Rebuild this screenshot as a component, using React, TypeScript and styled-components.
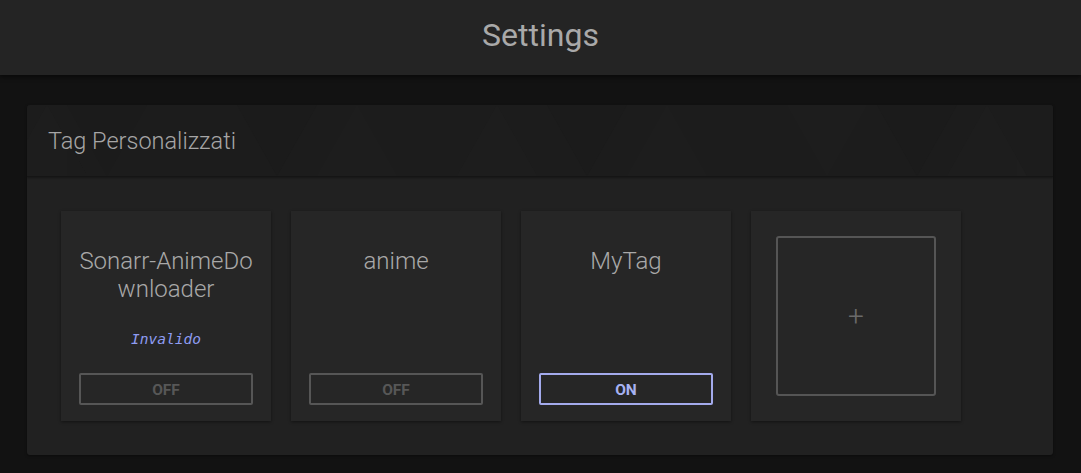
import React from "react";
import styled, { createGlobalStyle } from "styled-components";

const Global = createGlobalStyle`
  html, body { margin: 0; padding: 0; background: #121212; }
  body { font-family: Roboto, "Noto Sans", sans-serif; }
  * { box-sizing: border-box; }
`;

const Page = styled.div`
  width: 1081px;
  min-height: 473px;
  background: #121212;
`;

const TopBar = styled.header`
  height: 75px;
  background: #242424;
  display: flex;
  align-items: center;
  justify-content: center;
  padding-bottom: 5px;
  box-shadow: 0 2px 4px rgba(0, 0, 0, 0.5);
`;

const Title = styled.h1`
  margin: 0;
  font-family: Roboto, sans-serif;
  font-weight: 400;
  font-size: 32px;
  color: #a9a9a9;
`;

const Content = styled.main`
  padding: 30px 28px 18px 27px;
`;

const Panel = styled.section`
  background: #212121;
  border-radius: 3px;
  overflow: hidden;
  box-shadow: 0 1px 3px rgba(0, 0, 0, 0.4);
`;

const PanelHeader = styled.div`
  position: relative;
  height: 72px;
  background: #1c1c1c;
  display: flex;
  align-items: center;
  padding-left: 21px;
  border-bottom: 1px solid #151515;
  box-shadow: 0 1px 2px rgba(0, 0, 0, 0.35);
`;

const Pattern = styled.svg`
  position: absolute;
  inset: 0;
  width: 100%;
  height: 100%;
`;

const PanelTitle = styled.h2`
  position: relative;
  margin: 0;
  font-family: Roboto, sans-serif;
  font-weight: 300;
  font-size: 23.5px;
  color: #a6a6a6;
`;

const Grid = styled.div`
  display: flex;
  gap: 20px;
  padding: 34px 34px 34px 34px;
`;

const Card = styled.div`
  width: 210px;
  height: 210px;
  background: #262626;
  box-shadow: 0 1px 3px rgba(0, 0, 0, 0.45);
  display: flex;
  flex-direction: column;
  align-items: stretch;
  padding: 36px 18px 16px;
`;

const TagName = styled.div`
  font-family: Roboto, sans-serif;
  font-weight: 300;
  font-size: 24px;
  line-height: 28px;
  color: #a9a9a9;
  text-align: center;
  word-break: break-all;
`;

const Invalid = styled.div`
  margin-top: 28px;
  font-family: "DejaVu Sans Mono", "Liberation Mono", monospace;
  font-style: italic;
  font-size: 14.5px;
  color: #8e9cf2;
  text-align: center;
`;

const Toggle = styled.button<{ $on?: boolean }>`
  margin-top: auto;
  height: 32px;
  width: 100%;
  background: transparent;
  border: 2px solid ${(p) => (p.$on ? "#a3aaec" : "#565656")};
  border-radius: 2px;
  padding-top: 2px;
  font-family: Roboto, sans-serif;
  font-weight: 700;
  font-size: 15.5px;
  color: ${(p) => (p.$on ? "#a6b2f2" : "#575757")};
  cursor: pointer;
`;

const AddCard = styled(Card)`
  padding: 25px;
`;

const AddBox = styled.button`
  width: 160px;
  height: 160px;
  background: transparent;
  border: 2px solid #555;
  border-radius: 3px;
  display: flex;
  align-items: center;
  justify-content: center;
  font-family: Roboto, sans-serif;
  font-weight: 300;
  font-size: 28px;
  color: #6a6a6a;
  padding: 0;
  cursor: pointer;
`;

const tags = [
  { name: "Sonarr-AnimeDownloader", invalid: true, on: false },
  { name: "anime", invalid: false, on: false },
  { name: "MyTag", invalid: false, on: true },
];

export default function App() {
  return (
    <Page>
      <Global />
      <TopBar>
        <Title>Settings</Title>
      </TopBar>
      <Content>
        <Panel>
          <PanelHeader>
            <Pattern viewBox="0 0 1026 72" preserveAspectRatio="none">
              <g fill="#1f1f1f" opacity="0.5">
                <polygon points="20,0 60,72 -20,72" />
                <polygon points="150,0 190,72 110,72" />
                <polygon points="330,0 370,72 290,72" />
                <polygon points="470,0 510,72 430,72" />
                <polygon points="640,0 680,72 600,72" />
                <polygon points="800,72 840,0 760,0" />
                <polygon points="960,0 1000,72 920,72" />
              </g>
              <g fill="#1a1a1a" opacity="0.5">
                <polygon points="80,72 120,0 40,0" />
                <polygon points="250,72 290,0 210,0" />
                <polygon points="560,72 600,0 520,0" />
                <polygon points="890,72 930,0 850,0" />
              </g>
            </Pattern>
            <PanelTitle>Tag Personalizzati</PanelTitle>
          </PanelHeader>
          <Grid>
            {tags.map((t) => (
              <Card key={t.name}>
                <TagName>{t.name}</TagName>
                {t.invalid && <Invalid>Invalido</Invalid>}
                <Toggle $on={t.on}>{t.on ? "ON" : "OFF"}</Toggle>
              </Card>
            ))}
            <AddCard>
              <AddBox>+</AddBox>
            </AddCard>
          </Grid>
        </Panel>
      </Content>
    </Page>
  );
}
